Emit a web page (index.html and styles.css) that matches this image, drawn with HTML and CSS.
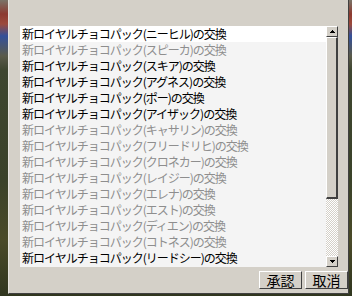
FILE: index.html
```html
<!DOCTYPE html>
<html lang="ja">
<head>
    <meta charset="UTF-8">
    <title>交換</title>
    <link rel="stylesheet" href="styles.css">
</head>
<body>
    <div class="dialog">
        <div class="listbox">
            <ul class="rows">
                <li class="row row-first">新ロイヤルチョコパック(ニーヒル)の交換</li>
                <li class="row off">新ロイヤルチョコパック(スピーカ)の交換</li>
                <li class="row">新ロイヤルチョコパック(スキア)の交換</li>
                <li class="row">新ロイヤルチョコパック(アグネス)の交換</li>
                <li class="row">新ロイヤルチョコパック(ポー)の交換</li>
                <li class="row">新ロイヤルチョコパック(アイザック)の交換</li>
                <li class="row off">新ロイヤルチョコパック(キャサリン)の交換</li>
                <li class="row off">新ロイヤルチョコパック(フリードリヒ)の交換</li>
                <li class="row off">新ロイヤルチョコパック(クロネカー)の交換</li>
                <li class="row off">新ロイヤルチョコパック(レイジー)の交換</li>
                <li class="row off">新ロイヤルチョコパック(エレナ)の交換</li>
                <li class="row off">新ロイヤルチョコパック(エスト)の交換</li>
                <li class="row off">新ロイヤルチョコパック(ディエン)の交換</li>
                <li class="row off">新ロイヤルチョコパック(コトネス)の交換</li>
                <li class="row">新ロイヤルチョコパック(リードシー)の交換</li>
            </ul>
            <div class="scrollbar">
                <div class="sb-btn">
                    <svg width="5" height="3" viewBox="0 0 5 3"><path d="M2 0h1v1h1v1h1v1H0V2h1V1h1z" fill="#000"/></svg>
                </div>
                <div class="sb-thumb"></div>
                <div class="sb-track"></div>
                <div class="sb-btn">
                    <svg width="5" height="3" viewBox="0 0 5 3"><path d="M0 0h5v1H4v1H3v1H2V2H1V1H0z" fill="#000"/></svg>
                </div>
            </div>
        </div>
        <div class="actions">
            <button class="btn">承認</button>
            <button class="btn">取消</button>
        </div>
    </div>
</body>
</html>
```

FILE: styles.css
```css
body {
    margin: 0;
    width: 352px;
    height: 296px;
    overflow: hidden;
    font-family: "Noto Sans CJK JP", "DejaVu Sans", sans-serif;
    background: linear-gradient(to bottom, #7a7468 0, #8c3a30 14px, #9c4a3c 24px, #34509a 36px, #5a5a4a 56px, #3e4630 70px, #3a4229 180px, #4a4a28 240px, #30361f 296px);
}

.dialog {
    margin-left: 8px;
    width: 341px;
    height: 294px;
    box-sizing: border-box;
    padding: 26px 0 0 11px;
    background-color: #d4d0c8;
    border-left: 1px solid #e6e4de;
    border-right: 1px solid #404040;
    border-bottom: 1px solid #404040;
}

.listbox {
    display: flex;
    width: 318px;
    height: 241px;
}

.rows {
    flex: 1;
    margin: 0;
    padding: 0;
    list-style: none;
    background-color: #f4f4f4;
}

.row {
    height: 16px;
    line-height: 16px;
    padding-left: 2px;
    font-size: 12px;
    letter-spacing: -1px;
    color: #000;
    white-space: nowrap;
}

.row-first {
    background-color: #fff;
}

.off {
    color: #8e8e8e;
}

.scrollbar {
    width: 12px;
    display: flex;
    flex-direction: column;
}

.sb-btn {
    height: 11px;
    box-sizing: border-box;
    display: flex;
    align-items: center;
    justify-content: center;
    background-color: #d4d0c8;
    border-top: 1px solid #fff;
    border-left: 1px solid #fff;
    border-right: 1px solid #404040;
    border-bottom: 1px solid #404040;
}

.sb-thumb {
    height: 162px;
    box-sizing: border-box;
    background-color: #d4d0c8;
    border-top: 1px solid #fff;
    border-left: 1px solid #fff;
    border-right: 2px solid #404040;
    border-bottom: 2px solid #404040;
}

.sb-track {
    flex: 1;
    background: repeating-conic-gradient(#fff 0 25%, #d4d0c8 0 50%) 0 0 / 2px 2px;
}

.actions {
    display: flex;
    justify-content: flex-end;
    gap: 3px;
    margin-top: 4px;
}

.btn {
    width: 43px;
    height: 18px;
    padding: 0;
    box-sizing: border-box;
    font-family: "Noto Sans CJK JP", sans-serif;
    font-size: 14px;
    line-height: 15px;
    color: #000;
    background-color: #d4d0c8;
    border-top: 1px solid #fff;
    border-left: 1px solid #fff;
    border-right: 1px solid #404040;
    border-bottom: 1px solid #404040;
}
```
